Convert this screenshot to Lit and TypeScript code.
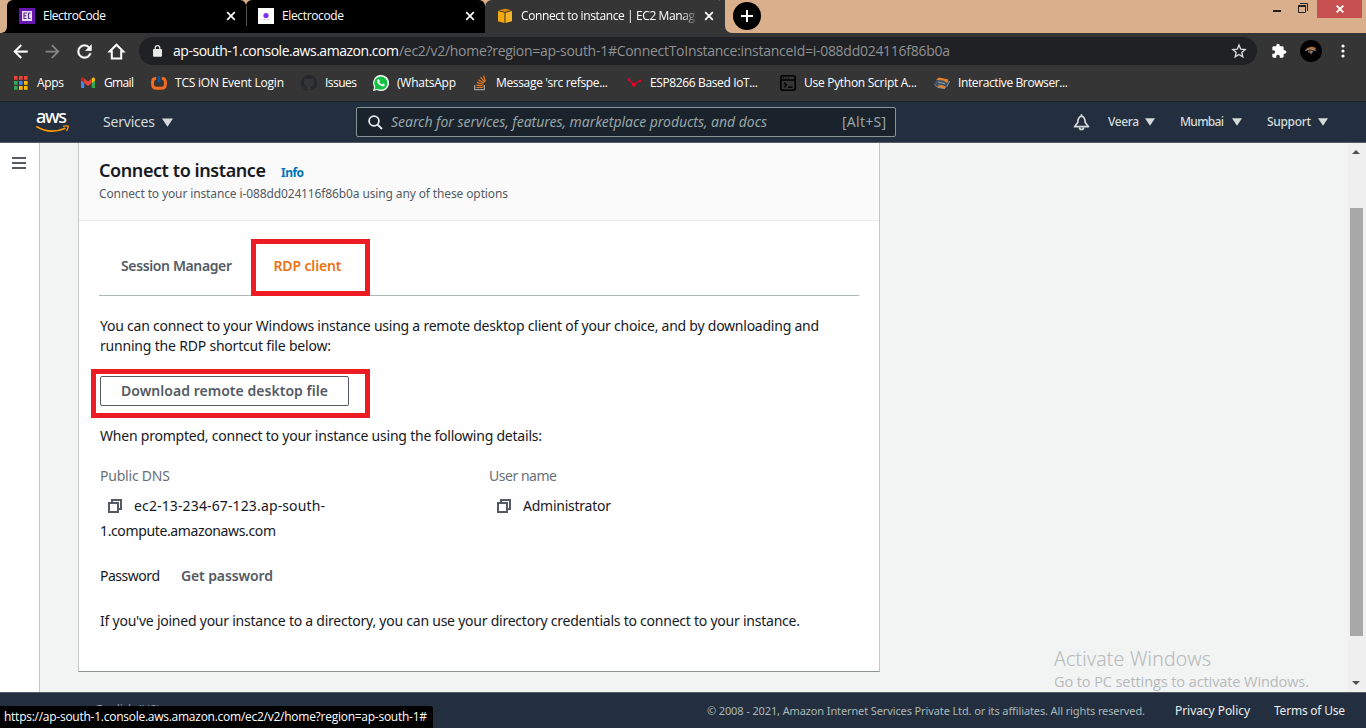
import { LitElement, html, css, svg } from "lit";
import { customElement, property } from "lit/decorators.js";

/** A single line of text tracked so that it fills exactly `w` pixels. */
@customElement("fit-text")
class FitText extends LitElement {
  @property({ type: Number }) w = 0;
  @property() text = "";
  static styles = css`
    :host { display: inline-block; white-space: pre; flex: none; }
  `;
  render() {
    return html`<span>${this.text}</span>`;
  }
  async updated() {
    await document.fonts.ready;
    const s = this.renderRoot.querySelector("span") as HTMLElement;
    s.style.letterSpacing = "0px";
    const d = (this.w - s.getBoundingClientRect().width) / Math.max(1, this.text.length - 1);
    s.style.letterSpacing = d.toFixed(3) + "px";
    this.style.width = this.w + "px";
  }
}

const t = (text: string, w: number) => html`<fit-text .text=${text} .w=${w}></fit-text>`;

const icons: Record<string, unknown> = {
  apps: html`<svg width="16" height="16" viewBox="0 0 16 16">
    ${[["#ea4335", "#ea4335", "#ea4335"], ["#34a853", "#4285f4", "#fbbc04"], ["#34a853", "#fbbc04", "#fbbc04"]].map((r, y) =>
      r.map((c, x) => svg`<rect x=${1 + x * 5} y=${1 + y * 5} width="3.6" height="3.8" fill=${c}/>`))}
  </svg>`,
  gmail: html`<svg width="16" height="16" viewBox="0 0 16 16">
    <path fill="#4285f4" d="M1 4v9h3.2V6.6z"/><path fill="#34a853" d="M15 4v9h-3.2V6.6z"/>
    <path fill="#fbbc04" d="M11.8 4v4L15 5.6V4.2c0-1.6-1.6-2.2-2.6-1.3z"/>
    <path fill="#c5221f" d="M1 4.2c0-1.6 1.6-2.2 2.6-1.3l.6.5V8L1 5.6z"/>
    <path fill="#ea4335" d="M4.2 3.4 8 6.4l3.8-3V8L8 11 4.2 8z"/></svg>`,
  tcs: html`<svg width="16" height="16" viewBox="0 0 16 16"><path fill="none" stroke="#f26b22" stroke-width="3" d="M5.2 3.6H4.6Q1.6 3.6 1.6 7v2.2q0 4 4 4h4.8q4 0 4-4V7q0-3.4-3-3.4h-.6"/><path stroke="#0b57a4" stroke-width="2.6" stroke-linecap="round" d="M8 2.3v4"/></svg>`,
  github: html`<svg width="16" height="16" viewBox="0 0 16 16"><path fill="#24292e" d="M8 0C3.58 0 0 3.58 0 8c0 3.54 2.29 6.53 5.47 7.59.4.07.55-.17.55-.38 0-.19-.01-.82-.01-1.49-2.01.37-2.53-.49-2.69-.94-.09-.23-.48-.94-.82-1.13-.28-.15-.68-.52-.01-.53.63-.01 1.08.58 1.23.82.72 1.21 1.87.87 2.33.66.07-.52.28-.87.51-1.07-1.78-.2-3.64-.89-3.64-3.95 0-.87.31-1.59.82-2.15-.08-.2-.36-1.02.08-2.12 0 0 .67-.21 2.2.82.64-.18 1.32-.27 2-.27s1.36.09 2 .27c1.53-1.04 2.2-.82 2.2-.82.44 1.1.16 1.92.08 2.12.51.56.82 1.27.82 2.15 0 3.07-1.87 3.75-3.65 3.95.29.25.54.73.54 1.48 0 1.07-.01 1.93-.01 2.2 0 .21.15.46.55.38A8.01 8.01 0 0 0 16 8c0-4.42-3.58-8-8-8z"/></svg>`,
  whatsapp: html`<svg width="16" height="16" viewBox="0 0 16 16"><path fill="#fff" d="M0 16l1.1-4.1A8 8 0 1 1 4.2 15z"/><path fill="#12c143" d="M1.5 14.5l.8-2.8a6.6 6.6 0 1 1 2.4 2.2z"/><path fill="#fff" d="M5.4 4.2c.3-.1.7 0 .8.3l.6 1.3c.1.4-.5.9-.6 1.1.7 1.3 1.6 2 2.9 2.6.3-.1.8-.9 1.1-.9l1.5.8c.4.3-.1 1.3-.5 1.6-1.4.9-3.3-.1-4.5-1.1C5.5 8.9 4.1 7.3 4.2 5.9c0-.7.5-1.5 1.2-1.700z"/></svg>`,
  stack: html`<svg width="16" height="16" viewBox="-2 0 16 16" fill="none"><path stroke="#9aa0a8" stroke-width="1.3" d="M.7 10v4.700h9.600V10"/><path stroke="#e87922" stroke-width="1.200" d="M2.300 12.500h6.500M2.400 10.100l6.400.7M3 7.400l6.200 1.900M4.300 4.700l5.600 3.300M6.600 2.200l4.100 5M9.600.6l1.800 5.900"/></svg>`,
  esp: html`<svg width="16" height="16" viewBox="0 0 16 16"><path stroke="#e4002b" stroke-width="1.200" fill="none" d="M2.800 4.500 7.800 9.500 14 5.800"/><g fill="#e4002b"><circle cx="2.800" cy="4.500" r="1.300"/><circle cx="8" cy="9.600" r="2.200"/><circle cx="14" cy="5.800" r="1.200"/></g></svg>`,
  term: html`<svg width="16" height="16" viewBox="0 0 16 16" fill="none" stroke="#000"><rect x=".8" y=".8" width="14.400" height="14.400" rx="2" stroke-width="1.600"/><path stroke-width="1.400" d="M1 5h14M4 7.700l2.500 2.300L4 12.300M8 12.200h4.500"/><path d="M3 2.900h1M5.500 2.900h1M8 2.900h1"/></svg>`,
  board: html`<svg width="16" height="16" viewBox="0 0 16 16"><path fill="#3f5566" d="M0 9 3 4l13 2.500-4 6z"/><path fill="#e2802b" d="M2 4.500 5 2.500l9.500 2L13 8 9.500 5.500 4.500 5zM3 10.800l4-.8 5.500 1.800-2 1.700-5.500-1.200z"/><path stroke="#9db0bb" stroke-width=".8" fill="none" d="M.5 9.500 4 12.500l7 1M15.500 6l-2.500 5.500M4 7l7 1.800"/></svg>`,
};

const bookmarks: [string, string, number, number][] = [
  ["apps", "Apps", 27, 67], ["gmail", "Gmail", 30, 71], ["tcs", "TCS iON Event Login", 109, 150],
  ["github", "Issues", 32, 72], ["whatsapp", "(WhatsApp", 59, 99], ["stack", "Message 'src refspe...", 112, 154],
  ["esp", "ESP8266 Based IoT...", 108, 154], ["term", "Use Python Script A...", 113, 154], ["board", "Interactive Browser...", 110, 140],
];

const closeX = html`<svg class="x" width="10" height="10" viewBox="0 0 10 10"><path d="M1.200 1.200l7.600 7.600M8.800 1.200L1.200 8.800" stroke="#fff" stroke-width="1.700"/></svg>`;
const caret = html`<svg class="caret" width="10" height="8" viewBox="0 0 10 8"><path d="M0 .3h10L5 7.800z" fill="#d5dbdb"/></svg>`;
const copy = html`<svg class="copy" width="14" height="14" viewBox="0 0 14 14" fill="none" stroke="#545b64" stroke-width="2"><path d="M1 4h9v9H1z"/><path d="M4 3.500V1h9v9h-2.500"/></svg>`;

@customElement("app-root")
class AppRoot extends LitElement {
  static styles = css`
    :host { display: flex; flex-direction: column; width: 1366px; height: 728px; overflow: hidden; position: relative;
      font: 12px/16px "Open Sans", "Noto Sans", sans-serif; color: #fff; background: #f2f3f3; }
    * { box-sizing: border-box; }
    svg { display: block; flex: none; }
    .strip { height: 33px; flex: none; display: flex; background: linear-gradient(90deg, #000 0 7px, #d9af8c 7px 720px, #353535 720px); }
    .lead { width: 7px; background: #d9af8c; border-bottom-right-radius: 6px; }
    .tab { width: 239px; height: 33px; background: #000; display: flex; align-items: center; padding: 0 10px 1px 12px; }
    .tab.one, .tab.two { border-radius: 6px 6px 0 0; }
    .tab.two::before { content: ""; width: 1px; height: 20px; background: #555; margin-left: -12px; margin-right: 11px; }
    .tab.on { width: 240px; background: #353535; border-radius: 7px 7px 0 0; padding-right: 11px; }
    .tab fit-text { margin-left: 8px; }
    .tab .x { margin-left: auto; }
    .on fit-text { -webkit-mask: linear-gradient(90deg, #000 160px, transparent 178px); mask: linear-gradient(90deg, #000 160px, transparent 178px); }
    .rest-strip { flex: 1; display: flex; background: #d9af8c; border-bottom-left-radius: 7px; }
    .plus { margin: 2px 0 0 8px; width: 28px; height: 28px; border-radius: 50%; background: #000; display: grid; place-items: center; }
    .win { margin-left: auto; display: flex; height: 18px; align-items: center; }
    .min { width: 8px; height: 2px; background: #222; margin: 4px 17px 0 0; }
    .restore { margin: -3px 9px 0 0; }
    .close { width: 45px; height: 18px; background: #c75050; display: grid; place-items: center; margin-right: 4px; }
    .bar { height: 36px; flex: none; background: #353535; display: flex; align-items: center; padding-left: 10px; }
    .bar .nav { margin-right: 11px; }
    .omni { width: 1118px; height: 28px; margin-left: 1px; border-radius: 14px; background: #202124; display: flex; align-items: center; font-size: 14px; padding: 0 10px 0 14px; }
    .omni .rest { color: #8f9193; display: flex; }
    .omni .lock { margin-right: 11px; }
    .omni .star { margin-left: auto; }
    .ext { margin-left: 14px; }
    .me { width: 22px; height: 22px; border-radius: 50%; background: #000; margin-left: 13px; display: grid; place-items: center; }
    .dots { margin-left: 19px; }
    .marks { height: 32px; flex: none; background: #353535; display: flex; align-items: center; padding: 0 0 5px 13px; }
    .mark { display: flex; align-items: center; gap: 8px; flex: none; }
    .aws { height: 42px; flex: none; background: #232f3e; border-top: 1px solid #1f2126; border-bottom: 1px solid #545b64; display: flex; align-items: center; padding-left: 36px;
      font: 14px/20px "Noto Sans", sans-serif; color: #d5dbdb; }
    .logo { width: 34px; height: 26px; font: 500 18px/18px "Noto Sans", sans-serif; color: #fff; margin-bottom: 5px; }
    .logo fit-text { display: block; height: 18px; }
    .services { margin-left: 33px; display: flex; align-items: center; gap: 7px; }
    .search { margin-left: 183px; width: 540px; height: 30px; border: 1px solid #879596; border-radius: 2px; background: #1a222c; display: flex; align-items: center; padding: 0 9px 0 11px; color: #95a5a6; }
    .search i { margin-left: 8px; }
    .search .key { margin-left: auto; }
    .bell { margin-left: 177px; }
    .menu { display: flex; align-items: center; gap: 7px; font-size: 12px; font-weight: 500; }
    .veera { margin-left: 18px; gap: 6px; }
    .mumbai { margin-left: 25px; gap: 8px; }
    .support { margin-left: 25px; }
    .main { flex: 1; min-height: 0; display: flex; font: 14px/20px "Noto Sans", sans-serif; color: #16191f; }
    .rail { width: 40px; background: #fff; border-right: 1px solid #c3c7c7; padding: 14px 0 0 12px; }
    .panel { width: 802px; height: 529px; margin-left: 38px; background: #fff; border: 1px solid #c3c9c9; border-top: 0; border-bottom-color: #879596; }
    .head { height: 78px; background: #fafafa; border-bottom: 1px solid #eaeded; padding: 15px 20px 0; color: #545b64; font-size: 12px; line-height: 16px; }
    .title { display: flex; align-items: baseline; font-size: 18px; line-height: 24px; color: #16191f; font-weight: 600; height: 24px; }
    .info { color: #0073bb; font-size: 12px; font-weight: 700; margin-left: 15px; }
    .sub { margin-top: 4px; }
    .tabs { margin: 0 20px; height: 75px; border-bottom: 1px solid #aab7b8; display: flex; padding: 35px 0 0 22px; font-weight: 600; color: #545b64; }
    .rdp { color: #ec7211; margin-left: 41.500px; }
    .body { padding: 20px 21px 0; }
    .btn { width: 249px; height: 30px; margin-top: 20px; border: 1px solid #545b64; border-radius: 2px; display: flex; align-items: center; justify-content: center; font-weight: 600; color: #545b64; }
    .prompt { margin-top: 20px; height: 20px; }
    .cols { display: grid; grid-template-columns: 389px auto; margin-top: 20px; height: 80px; }
    .label { color: #687078; height: 20px; }
    .val { display: flex; align-items: center; margin-top: 7px; height: 25px; gap: 12px; padding-left: 8px; }
    .wrap { height: 25px; line-height: 25px; }
    .pw { display: flex; gap: 21px; margin-top: 20px; }
    .get { font-weight: 600; color: #545b64; }
    .dir { margin-top: 25px; }
    .scroll { width: 18px; margin-left: auto; background: #f0f0f0; display: flex; flex-direction: column; padding: 7px 0 7px 2px; }
    .thumb { width: 13px; height: 428px; background: #a8a8a8; margin-top: 54px; }
    .down { margin-top: auto; }
    .arr { margin-left: 2px; }
    .foot { height: 36px; flex: none; background: #232f3e; border-top: 1px solid #545b64; display: flex; align-items: center; padding-left: 96px; font: 12px/16px "Noto Sans", sans-serif; color: #d5dbdb; }
    .copyr { font-size: 11px; color: #aab7b8; margin-left: 547px; }
    .lang { color: #8d979a; margin-bottom: 1px; }
    .priv { margin-left: 30px; color: #eaeded; }
    .terms { margin-left: 24px; color: #eaeded; }
    .status { position: absolute; left: 0; bottom: 0; width: 433px; height: 22px; background: #000; border-top-right-radius: 3px; padding: 3px 0 0 4px; }
    .box { position: absolute; border: 5px solid #ed1c24; }
    .b1 { left: 251px; top: 239px; width: 119px; height: 57px; }
    .b2 { left: 91px; top: 369px; width: 279px; height: 49px; }
    .water { position: absolute; left: 1054px; top: 646px; color: #b8bbbb; font: 300 19.500px/26px "Open Sans", sans-serif; -webkit-text-stroke: .2px #b8bbbb; }
    .water fit-text { display: block; }
    .w2 { font-size: 14.500px; line-height: 20px; font-weight: 400; -webkit-text-stroke: 0; }
  `;
  render() {
    return html`
      <div class="strip">
        <div class="lead"></div>
        <div class="tab one"><svg width="16" height="16"><path fill="#6717b0" d="M0 0h16v16H0z"/><path fill="#eadcf6" d="M3 3h10v10H3z"/><path d="M8 5H5v5.500h2.500M5 7.700h2.500M11.500 5H9.500v5.500h2" stroke="#5a3181" fill="none" stroke-width="1.100"/></svg>${t("ElectroCode", 63)}${closeX}</div>
        <div class="tab two"><svg width="16" height="16"><path fill="#fff" d="M0 0h16v16H0z"/><circle cx="8" cy="7.500" r="2.600" fill="#7f2df0"/><path d="M4 11.500h8" stroke="#ddd0f0"/></svg>${t("Electrocode", 62)}${closeX}</div>
        <div class="tab on"><svg width="16" height="16" viewBox="0 0 16 16"><path fill="#f7a80d" d="M1 3l6.500 1.700V15L1 13.300z"/><path fill="#f2b32b" d="M15 3 8.500 4.700V15l6.500-1.700z"/><path fill="#d68910" d="M1.500 2.200 8 .7l6.500 1.500L8 3.900z"/></svg>${t("Connect to instance | EC2 Manag", 174)}${closeX}</div>
        <div class="rest-strip">
          <div class="plus"><svg width="12" height="12"><path d="M6 0v12M0 6h12" stroke="#fff" stroke-width="2"/></svg></div>
          <div class="win"><div class="min"></div>
            <svg class="restore" width="10" height="10" fill="none" stroke="#222"><path d="M.5 3.500h7v6h-7z"/><path d="M0 3h8" stroke-width="2"/><path d="M2 .5h7.500V8"/></svg>
            <div class="close"><svg width="8" height="8"><path d="M.7.700l6.600 6.600M7.300.7L.7 7.300" stroke="#fff" stroke-width="1.900"/></svg></div></div>
        </div>
      </div>
      <div class="bar">
        <svg class="nav" width="21" height="21" viewBox="0 0 24 24" fill="#fff" stroke="#fff" stroke-width=".4"><path d="M20 11H7.830l5.590-5.590L12 4l-8 8 8 8 1.410-1.410L7.830 13H20v-2z"/></svg>
        <svg class="nav" width="21" height="21" viewBox="0 0 24 24" fill="#858585"><path d="M12 4l-1.410 1.410L16.170 11H4v2h12.170l-5.580 5.590L12 20l8-8z"/></svg>
        <svg class="nav" width="21" height="21" viewBox="0 0 24 24" fill="#fff" stroke="#fff" stroke-width=".4"><path d="M17.650 6.350A7.958 7.958 0 0 0 12 4a8 8 0 1 0 7.730 10h-2.080A5.990 5.990 0 0 1 12 18c-3.310 0-6-2.690-6-6s2.690-6 6-6c1.660 0 3.140.69 4.220 1.780L13 11h7V4l-2.350 2.350z"/></svg>
        <svg class="nav" width="21" height="21" viewBox="0 0 21 21"><path fill="none" stroke="#fff" stroke-width="2" d="M3.700 10.500 10.500 3.700l6.800 6.800h-2.100v7H5.800v-7z"/></svg>
        <div class="omni">
          <svg class="lock" width="9" height="12" viewBox="0 0 9 12"><rect y="4" width="9" height="7.700" rx="1" fill="#e8e8e8"/><path d="M2.200 4.500V3a2.300 2.300 0 0 1 4.600 0v1.500" fill="none" stroke="#e8e8e8" stroke-width="1.200"/></svg>
          ${t("ap-south-1.console.aws.amazon.com", 226)}<span class="rest">${t("/ec2/v2/home?region=ap-south-1#ConnectToInstance:instanceId=i-088dd024116f86b0a", 551)}</span>
          <svg class="star" width="16" height="16" viewBox="0 0 24 24" fill="none" stroke="#ddd" stroke-width="2"><path d="M12 3l2.600 6.200 6.600.6-5 4.400 1.500 6.500-5.700-3.500-5.700 3.500 1.500-6.500-5-4.400 6.600-.6z"/></svg>
        </div>
        <svg class="ext" width="16" height="16" viewBox="0 0 24 24" fill="#fff"><path d="M20.500 11H19V7c0-1.100-.9-2-2-2h-4V3.500C13 2.120 11.880 1 10.500 1S8 2.120 8 3.500V5H4c-1.100 0-1.990.9-1.990 2v3.800H3.500c1.490 0 2.700 1.210 2.700 2.700s-1.210 2.700-2.700 2.700H2V20c0 1.100.9 2 2 2h3.800v-1.500c0-1.490 1.210-2.700 2.700-2.700 1.490 0 2.700 1.210 2.700 2.700V22H17c1.100 0 2-.9 2-2v-4h1.500c1.380 0 2.500-1.120 2.500-2.500S21.880 11 20.500 11z"/></svg>
        <div class="me"><svg width="12" height="10" viewBox="0 0 12 10"><path fill="#bd6b26" d="M2 2l5-1.500L11 2l-1 2-2 .5L6 9 5 5.500 1 4z"/><path stroke="#8295a3" d="M0 4.500 5 3l6 1.500M3 6h5"/></svg></div>
        <svg class="dots" width="4" height="14" fill="#fff"><circle cx="2" cy="2" r="1.600"/><circle cx="2" cy="7" r="1.600"/><circle cx="2" cy="12" r="1.600"/></svg>
      </div>
      <div class="marks">${bookmarks.map(([i, s, w, full]) => html`<div class="mark" style="width:${full}px">${icons[i]}${t(s, w)}</div>`)}</div>
      <div class="aws">
        <div class="logo">${t("aws", 31)}<svg width="34" height="9" viewBox="0 0 34 9" fill="none" stroke="#ff9900"><path stroke-width="1.700" d="M.3 1.500Q14 9.800 29.500 3.300"/><path stroke-width="1.300" d="M27 1.300q5.500-1 5.300.3T30.600 6"/></svg></div>
        <div class="services">${t("Services", 52)}<svg width="11" height="9" viewBox="0 0 11 9"><path d="M0 .5h11L5.500 8.800z" fill="#d5dbdb"/></svg></div>
        <div class="search"><svg width="15" height="15" fill="none" stroke="#eaeded" stroke-width="1.800"><circle cx="6" cy="6" r="4.900"/><path d="M9.500 9.500l4.500 4.500"/></svg>
          <i>${t("Search for services, features, marketplace products, and docs", 376)}</i><span class="key">${t("[Alt+S]", 44)}</span></div>
        <svg class="bell" width="17" height="17" viewBox="0 0 17 17" fill="none" stroke="#d5dbdb" stroke-width="1.700"><path stroke-linejoin="round" d="M1.500 12.700 4.800 8.500Q4.700 3.500 8.500 2q3.800 1.500 3.700 6.500l3.300 4.200z"/><path d="M6.500 13.500q0 2 2 2t2-2M8.500.3v2"/></svg>
        <div class="menu veera">${t("Veera", 31)}${caret}</div>
        <div class="menu mumbai">${t("Mumbai", 44)}${caret}</div>
        <div class="menu support">${t("Support", 44)}${caret}</div>
      </div>
      <div class="main">
        <div class="rail"><svg width="14" height="12"><path d="M0 1h14M0 6h14M0 11h14" stroke="#545b64" stroke-width="2"/></svg></div>
        <div class="panel">
          <div class="head"><div class="title">${t("Connect to instance", 167)}<span class="info">${t("Info", 23)}</span></div>
            <div class="sub">${t("Connect to your instance i-088dd024116f86b0a using any of these options", 409)}</div></div>
          <div class="tabs">${t("Session Manager", 111)}<span class="rdp">${t("RDP client", 68)}</span></div>
          <div class="body">
            ${t("You can connect to your Windows instance using a remote desktop client of your choice, and by downloading and", 719)}
            ${t("running the RDP shortcut file below:", 231)}
            <div class="btn">${t("Download remote desktop file", 207)}</div>
            <div class="prompt">${t("When prompted, connect to your instance using the following details:", 442)}</div>
            <div class="cols">
              <div><div class="label">${t("Public DNS", 70)}</div><div class="val">${copy}${t("ec2-13-234-67-123.ap-south-", 191)}</div><div class="wrap">${t("1.compute.amazonaws.com", 176)}</div></div>
              <div><div class="label">${t("User name", 68)}</div><div class="val">${copy}${t("Administrator", 88)}</div></div>
            </div>
            <div class="pw">${t("Password", 60)}<span class="get">${t("Get password", 92)}</span></div>
            <div class="dir">${t("If you've joined your instance to a directory, you can use your directory credentials to connect to your instance.", 700)}</div>
          </div>
        </div>
        <div class="scroll"><svg class="arr" width="8" height="4"><path d="M0 4l4-4 4 4z" fill="#505050"/></svg><div class="thumb"></div><svg class="arr down" width="8" height="4"><path d="M0 0l4 4 4-4z" fill="#505050"/></svg></div>
      </div>
      <div class="foot"><span class="lang">${t("English (US)", 64)}</span><span class="copyr">${t("© 2008 - 2021, Amazon Internet Services Private Ltd. or its affiliates. All rights reserved.", 438)}</span><span class="priv">${t("Privacy Policy", 75)}</span><span class="terms">${t("Terms of Use", 71)}</span></div>
      <div class="box b1"></div><div class="box b2"></div>
      <div class="water">${t("Activate Windows", 157)}<div class="w2">${t("Go to PC settings to activate Windows.", 255)}</div></div>
      <div class="status">${t("https://ap-south-1.console.aws.amazon.com/ec2/v2/home?region=ap-south-1#", 423)}</div>
    `;
  }
}
